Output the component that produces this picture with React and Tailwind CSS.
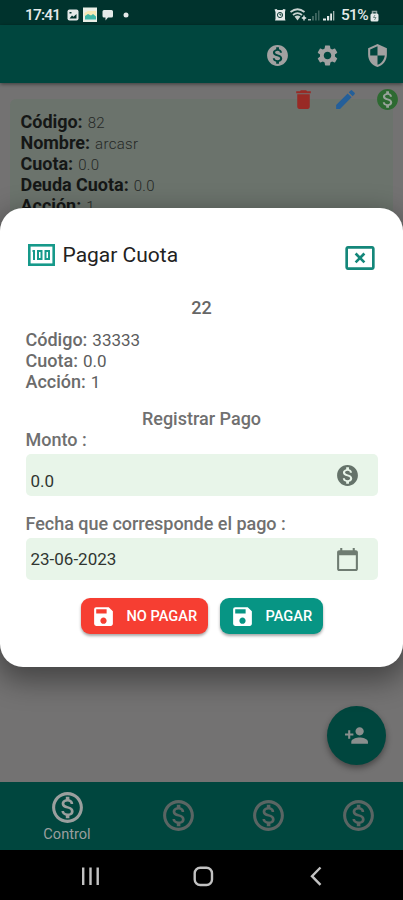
import { useState } from "react"
import {
  MdMonetizationOn,
  MdOutlineMonetizationOn,
  MdSettings,
  MdSecurity,
  MdDelete,
  MdEdit,
  MdSave,
  MdCalendarToday,
  MdPersonAdd,
  MdOutlineCancelPresentation,
} from "react-icons/md"

const member = [
  { label: "Código:", value: "82" },
  { label: "Nombre:", value: "arcasr" },
  { label: "Cuota:", value: "0.0" },
  { label: "Deuda Cuota:", value: "0.0" },
  { label: "Acción:", value: "1" },
]

const payment = [
  { label: "Código:", value: "33333" },
  { label: "Cuota:", value: "0.0" },
  { label: "Acción:", value: "1" },
]

function StatusBar() {
  return (
    <div className="flex h-[25px] items-center bg-[#00332d] pt-[5px] pl-[25px] text-[#e4eae9]">
      <span className="w-[42px] text-[15.5px] leading-5 font-medium tracking-[-0.8px]">17:41</span>
      <svg width="66" height="16" viewBox="0 0 66 16" className="shrink-0">
        <rect x="0.5" y="2.5" width="11" height="11" rx="2" fill="#e4eae9" />
        <path d="M2.5 11.5 5 8.5l1.5 1.2L9.5 7v4.5z" fill="#00332d" />
        <path d="M2.5 5h2v1.5h-2z" fill="#00332d" />
        <rect x="16" y="0.5" width="14" height="14.5" fill="#e9efe6" />
        <path d="M17.5 6 21 4h8v5H17.5z" fill="#f6e8b4" />
        <path d="M18 12.5V9l3-2 3 1.5 2-1.5 3 2.5v3z" fill="#3db5a5" />
        <path d="M37 3h7.5q1.5 0 1.5 1.5V9q0 1.5-1.5 1.5H41L38.5 13.5v-3H37Q35.5 10.5 35.5 9V4.5Q35.5 3 37 3z" fill="#e4eae9" />
        <circle cx="59" cy="8" r="2.5" fill="#e4eae9" />
      </svg>
      <svg width="66" height="16" viewBox="0 0 66 16" className="ml-[140px] shrink-0">
        <path d="M1.5 2.5 3.5 2l1 1h5l1-1 2 .5-.5 2.5v7l.5 1.5H2l.5-1.5V5z" fill="#e4eae9" />
        <circle cx="7" cy="8" r="2.6" fill="none" stroke="#00332d" strokeWidth="0.9" />
        <path d="M7 6.5V8h1.5" fill="none" stroke="#00332d" />
        <path d="M17.5 5q7-5.5 14 0M20 8q4.5-3.8 9 0" fill="none" stroke="#c7d2d0" strokeWidth="1.8" />
        <path d="M21.5 9.5q3-2 6 0l-3 4z" fill="#c7d2d0" />
        <path d="M31 8.5v5M28.8 11h4.4" stroke="#e4eae9" strokeWidth="1.4" />
        <path d="M35 13.5v-1.5h3v1.5z" fill="#aebdba" />
        <path d="M39 13.5V9h2v4.5zM42 13.5V6h1.8v7.5zM45 13.5V3.5h1.5v10z" fill="#3e6660" />
        <path d="M50 13.5V11.5h3v2zM54 13.5V9h2.2v4.5zM57.2 13.5V6.5h1.8v7z" fill="#e4eae9" />
        <path d="M60 13.5V4h1.3v9.5z" fill="#9fb1ae" />
      </svg>
      <span className="ml-[2px] w-[28px] text-[15.5px] leading-5 font-medium tracking-[-0.7px]">51%</span>
      <svg width="9" height="14" viewBox="0 0 9 14" className="ml-[1px] shrink-0">
        <path d="M2.5 6V3.5h4V6" fill="none" stroke="#8fa5a1" strokeWidth="1.5" />
        <rect x="0.5" y="5.5" width="8" height="8" rx="1.5" fill="#e4eae9" />
        <path d="m5 7-1.5 2.5H6L4.5 12" fill="none" stroke="#55756f" strokeWidth="0.8" />
      </svg>
    </div>
  )
}

function CashIcon() {
  return (
    <svg width="27" height="22" viewBox="0 0 27 22" fill="none" stroke="#16998a">
      <rect x="1.3" y="1.3" width="24.4" height="19.4" strokeWidth="2.6" />
      <path d="M4.5 7H6v9" strokeWidth="2" />
      <rect x="10" y="7" width="3.5" height="8" strokeWidth="2" />
      <rect x="17.5" y="7" width="3.5" height="8" strokeWidth="2" />
    </svg>
  )
}

function Field({ value, onChange, icon, className }) {
  return (
    <div className="flex h-[42px] items-center rounded-[5px] bg-[#e8f5e9] pr-[18px] pl-[5px]">
      <input
        value={value}
        onChange={(e) => onChange(e.target.value)}
        className={`min-w-0 flex-1 bg-transparent text-[17px] leading-5 text-[#303531] outline-none ${className}`}
      />
      {icon}
    </div>
  )
}

function PayDialog() {
  const [amount, setAmount] = useState("0.0")
  const [date, setDate] = useState("23-06-2023")

  return (
    <div className="absolute inset-x-0 top-[208px] h-[459px] rounded-[23px] bg-white px-[25.5px] shadow-[0_10px_28px_4px_rgba(0,0,0,0.4)]">
      <div className="flex h-[100px] items-start pt-[36px] pl-[2px]">
        <CashIcon />
        <h2 className="ml-[8px] text-[21px] leading-[23px] text-[#222]">Pagar Cuota</h2>
        <button className="-mt-[2px] mr-[2px] ml-auto">
          <MdOutlineCancelPresentation size={32} color="#14877a" />
        </button>
      </div>

      <p className="-mt-[11px] text-center text-[18px] leading-[21px] font-medium text-[#666]">22</p>

      <div className="mt-[11px] text-[#5c5c5c]">
        {payment.map((row) => (
          <p key={row.label} className="h-[21px] text-[18px] leading-[21px]">
            <span className="font-medium text-[#6b6b6b]">{row.label}</span>
            <span className="ml-[5px] text-[17px] leading-none">{row.value}</span>
          </p>
        ))}
      </div>

      <div className="mt-[16px] text-[18px] leading-[21px] font-medium text-[#707070]">
        <p className="text-center">Registrar Pago</p>
        <p>Monto :</p>
      </div>
      <div className="mt-[4px]">
        <Field value={amount} onChange={setAmount} className="pt-[11px]" icon={<MdMonetizationOn size={25} color="#65736a" />} />
      </div>
      <p className="mt-[17px] mb-[4px] text-[18px] leading-[21px] font-medium tracking-[-0.03px] text-[#707070]">Fecha que corresponde el pago :</p>
      <Field value={date} onChange={setDate} icon={<MdCalendarToday size={25} color="#6f7c72" />} />

      <div className="mt-[18px] ml-[55.5px] flex gap-[12px] text-[14.6px] font-medium text-white">
        <button className="flex h-[36px] w-[127px] items-center rounded-[9px] bg-[#f63e32] pl-[10px] shadow-[0_2px_3px_rgba(0,0,0,0.35)]">
          <MdSave size={25} />
          <span className="ml-[10.5px] pt-[2px] whitespace-nowrap">NO PAGAR</span>
        </button>
        <button className="flex h-[36px] w-[103px] items-center rounded-[9px] bg-[#079584] pl-[10px] shadow-[0_2px_3px_rgba(0,0,0,0.35)]">
          <MdSave size={25} />
          <span className="ml-[10.5px] pt-[2px]">PAGAR</span>
        </button>
      </div>
    </div>
  )
}

function BottomNav() {
  return (
    <nav className="flex h-[68px] bg-[#00463e] text-[#5a6563]">
      <div className="flex w-[134px] flex-col items-center pt-[7px] text-[#9a9f9e]">
        <MdOutlineMonetizationOn size={37} />
        <span className="text-[14.6px] leading-[17px]">Control</span>
      </div>
      {[1, 2, 3].map((i) => (
        <div key={i} className="flex flex-1 items-center justify-center pb-[2px]">
          <MdOutlineMonetizationOn size={37} />
        </div>
      ))}
    </nav>
  )
}

function SystemNav() {
  return (
    <div className="flex h-[50px] items-center justify-center bg-black">
      <svg width="403" height="50" viewBox="0 0 403 50" fill="none" stroke="#c2c2c2" strokeWidth="2.4">
        <path d="M83.2 17.5V35M90.5 17.5V35M97.7 17.5V35" />
        <rect x="194.7" y="17.7" width="17.3" height="17.3" rx="5.5" />
        <path d="m320.5 17.5-8.5 8.7 8.5 8.6" />
      </svg>
    </div>
  )
}

export default function App() {
  return (
    <div className="relative flex h-[900px] w-full flex-col overflow-hidden bg-[#737272] font-['Roboto','Noto_Sans',sans-serif]">
      <StatusBar />
      <header className="flex h-[58px] items-center justify-end gap-[25px] bg-[#00463e] pt-[2px] pr-[13px] text-[#a1a1a1] shadow-[0_1px_4px_rgba(0,0,0,0.5)]">
        <MdMonetizationOn size={25} />
        <MdSettings size={25} />
        <MdSecurity size={25} />
      </header>

      <main className="relative flex-1 px-[10px] pt-[16px]">
        <div className="h-[150px] rounded-[6px] bg-[#6b736c] pt-[12px] pl-[10.5px]">
          {member.map((row) => (
            <p key={row.label} className="h-[21px] text-[18px] leading-[21px] text-[#151716]">
              <span className="font-bold tracking-[-0.03px]">{row.label}</span>
              <span className="ml-[5px] text-[15px] leading-none font-light tracking-[0.3px] text-[#252826]">{row.value}</span>
            </p>
          ))}
        </div>
        <div className="absolute top-[4px] right-[3.5px] flex gap-[17px]">
          <MdDelete size={25} color="#982a25" />
          <MdEdit size={25} color="#245f9a" />
          <MdMonetizationOn size={25} color="#2d6a31" className="rounded-full bg-[radial-gradient(#99a39a_50%,transparent_52%)]" />
        </div>

        <button className="absolute right-[17px] bottom-[17px] flex size-[59px] items-center justify-center rounded-full bg-[#00463e] text-[#8a8f8e] shadow-[0_3px_6px_rgba(0,0,0,0.4)]">
          <MdPersonAdd size={25} />
        </button>
      </main>

      <BottomNav />
      <SystemNav />
      <PayDialog />
    </div>
  )
}
